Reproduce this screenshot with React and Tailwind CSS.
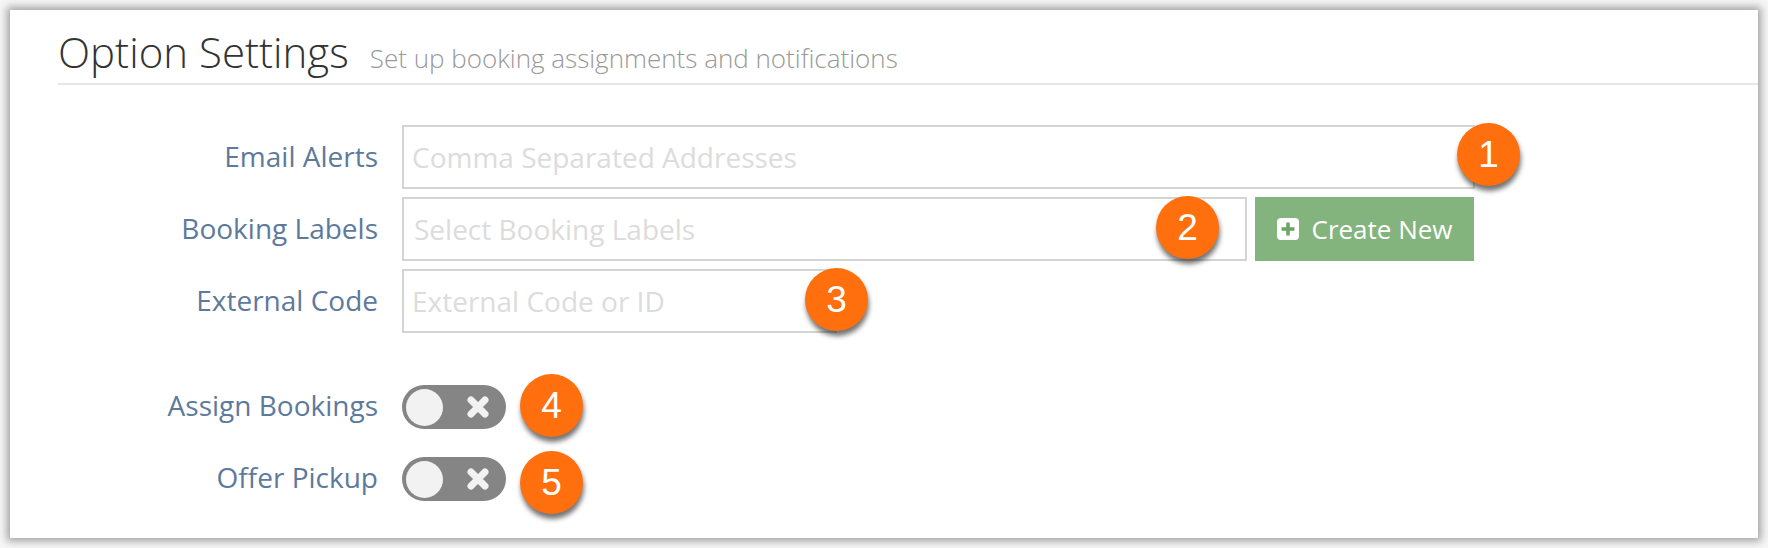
import React from "react";

function Badge({ n, className }) {
  return (
    <div
      className={`absolute w-[63px] h-[63px] rounded-full bg-[#ff6f0e] text-white flex items-center justify-center text-[37px] leading-none shadow-[1px_5px_5px_rgba(0,0,0,0.55)] ${className}`}
      style={{ fontFamily: '"Liberation Sans", Arial, sans-serif' }}
    >
      {n}
    </div>
  );
}

function Label({ children, className = "pb-[2px]" }) {
  return (
    <label className={`w-[320px] shrink-0 text-right pr-[24px] text-[28px] text-[#5d7a9c] leading-none whitespace-nowrap ${className}`}>
      {children}
    </label>
  );
}

function Field({ placeholder, className, textClass = "pl-[8px]" }) {
  return (
    <div className={`h-[64px] border-2 border-[#d4d4d4] bg-white flex items-center whitespace-nowrap pb-[1px] ${textClass} text-[28px] text-[#dcdcdc] ${className}`}>
      {placeholder}
    </div>
  );
}

function Toggle() {
  return (
    <div className="w-[104px] h-[44px] rounded-full bg-[#858585] flex items-center justify-between pl-[4px] pr-[16px]">
      <div className="w-[37px] h-[37px] rounded-full bg-[#f2f2f2]" />
      <svg width="24" height="24" viewBox="0 0 24 24">
        <path d="M5 5 L19 19 M19 5 L5 19" stroke="#f2f2f2" strokeWidth="7" strokeLinecap="round" />
      </svg>
    </div>
  );
}

export default function App() {
  return (
    <div className="w-[1768px] h-[548px] bg-[#f6f6f6] pt-[10px] pl-[10px] overflow-hidden" style={{ fontFamily: '"Open Sans", sans-serif' }}>
      <div className="relative w-[1748px] h-[528px] bg-white shadow-[0_0_8px_3px_rgba(0,0,0,0.35)] pl-[48px]">
        <div className="h-[75px] border-b-2 border-[#e6e6e6] flex items-baseline gap-[21px] pt-[17px]">
          <h1 className="text-[42px] leading-[50px] font-light text-[#333333]">Option Settings</h1>
          <span className="text-[26px] font-light text-[#999999]">Set up booking assignments and notifications</span>
        </div>

        <div className="flex flex-col gap-[8px] pt-[40px] ml-[24px]">
          <div className="flex items-center">
            <Label>Email Alerts</Label>
            <div className="relative">
              <Field placeholder="Comma Separated Addresses" className="w-[1073px]" />
              <Badge n="1" className="right-[-45px] top-[-2px]" />
            </div>
          </div>
          <div className="flex items-center">
            <Label>Booking Labels</Label>
            <div className="relative">
              <Field placeholder="Select Booking Labels" className="w-[845px]" textClass="pl-[10px]" />
              <Badge n="2" className="right-[28px] top-[-1px]" />
            </div>
            <button className="ml-[8px] w-[219px] h-[64px] bg-[#84b47e] text-white text-[26px] flex items-center justify-center gap-[13px]">
              <svg width="22" height="22" viewBox="0 0 22 22">
                <rect width="22" height="22" rx="4" fill="#ffffff" />
                <path d="M11 4.5V17.5M4.5 11H17.5" stroke="#6aa564" strokeWidth="3.5" />
              </svg>
              Create New
            </button>
          </div>
          <div className="flex items-center">
            <Label>External Code</Label>
            <div className="relative">
              <Field placeholder="External Code or ID" className="w-[435px]" />
              <Badge n="3" className="left-[403px] top-[-1px]" />
            </div>
          </div>
        </div>

        <div className="flex flex-col gap-[28px] pt-[52px] ml-[24px]">
          <div className="flex items-center">
            <Label className="pb-[4px]">Assign Bookings</Label>
            <div className="relative">
              <Toggle />
              <Badge n="4" className="left-[118px] top-[-11px]" />
            </div>
          </div>
          <div className="flex items-center">
            <Label className="pb-[4px]">Offer Pickup</Label>
            <div className="relative">
              <Toggle />
              <Badge n="5" className="left-[118px] top-[-6px]" />
            </div>
          </div>
        </div>
      </div>
    </div>
  );
}
